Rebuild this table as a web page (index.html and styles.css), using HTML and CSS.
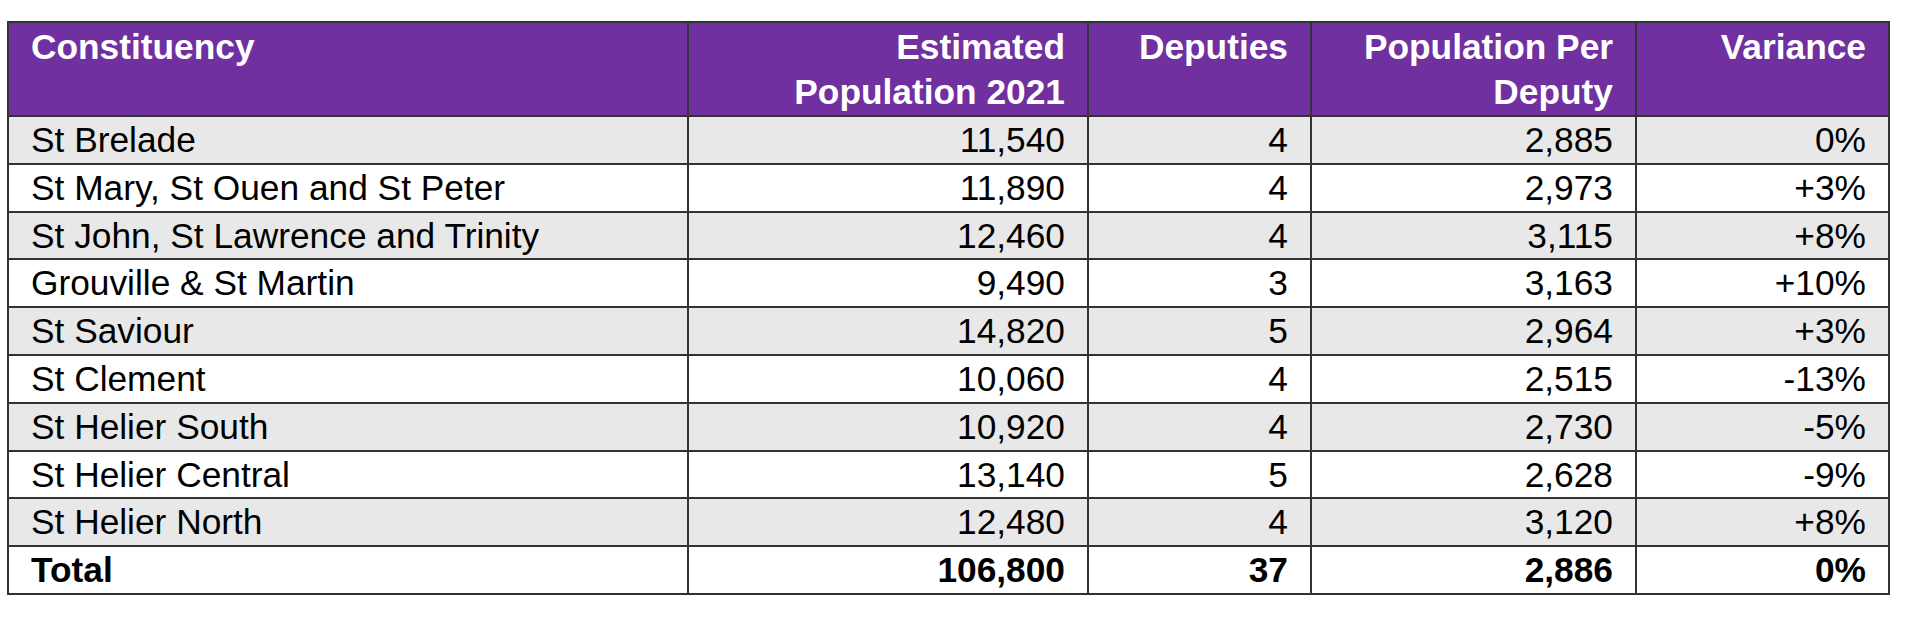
FILE: index.html
```html
<!DOCTYPE html>
<html lang="en">
<head>
<meta charset="utf-8">
<title>Constituency population</title>
<link rel="stylesheet" href="styles.css">
</head>
<body>
<table class="pop-table">
  <colgroup>
    <col class="c-name">
    <col class="c-est">
    <col class="c-dep">
    <col class="c-ppd">
    <col class="c-var">
  </colgroup>
  <thead>
    <tr class="head-row">
      <th class="left">Constituency</th>
      <th class="right">Estimated<br>Population 2021</th>
      <th class="right">Deputies</th>
      <th class="right">Population Per<br>Deputy</th>
      <th class="right">Variance</th>
    </tr>
  </thead>
  <tbody>
    <tr class="shade"><td class="left">St Brelade</td><td class="right">11,540</td><td class="right">4</td><td class="right">2,885</td><td class="right">0%</td></tr>
    <tr><td class="left">St Mary, St Ouen and St Peter</td><td class="right">11,890</td><td class="right">4</td><td class="right">2,973</td><td class="right">+3%</td></tr>
    <tr class="shade"><td class="left">St John, St Lawrence and Trinity</td><td class="right">12,460</td><td class="right">4</td><td class="right">3,115</td><td class="right">+8%</td></tr>
    <tr><td class="left">Grouville &amp; St Martin</td><td class="right">9,490</td><td class="right">3</td><td class="right">3,163</td><td class="right">+10%</td></tr>
    <tr class="shade"><td class="left">St Saviour</td><td class="right">14,820</td><td class="right">5</td><td class="right">2,964</td><td class="right">+3%</td></tr>
    <tr><td class="left">St Clement</td><td class="right">10,060</td><td class="right">4</td><td class="right">2,515</td><td class="right">-13%</td></tr>
    <tr class="shade"><td class="left">St Helier South</td><td class="right">10,920</td><td class="right">4</td><td class="right">2,730</td><td class="right">-5%</td></tr>
    <tr><td class="left">St Helier Central</td><td class="right">13,140</td><td class="right">5</td><td class="right">2,628</td><td class="right">-9%</td></tr>
    <tr class="shade"><td class="left">St Helier North</td><td class="right">12,480</td><td class="right">4</td><td class="right">3,120</td><td class="right">+8%</td></tr>
    <tr class="total"><td class="left">Total</td><td class="right">106,800</td><td class="right">37</td><td class="right">2,886</td><td class="right">0%</td></tr>
  </tbody>
</table>
</body>
</html>
```

FILE: styles.css
```css
html, body {
  margin: 0;
  padding: 0;
  background: #ffffff;
}

body {
  font-family: "Liberation Sans", Arial, sans-serif;
  color: #000000;
}

.pop-table {
  margin: 21px 0 0 7px;
  width: 1883px;
  table-layout: fixed;
  border-collapse: separate;
  border-spacing: 0;
  border-top: 2px solid #333333;
  border-left: 2px solid #333333;
  font-size: 35.3px;
}

.c-name { width: 680px; }
.c-est { width: 400px; }
.c-dep { width: 223px; }
.c-ppd { width: 325px; }
.c-var { width: 253px; }

.pop-table th,
.pop-table td {
  box-sizing: border-box;
  border-right: 2px solid #333333;
  border-bottom: 2px solid #333333;
  padding: 0 22px;
  white-space: nowrap;
}

.head-row th {
  background: #7030a0;
  color: #ffffff;
  font-weight: bold;
  height: 94px;
  line-height: 45px;
  padding-top: 1px;
  padding-bottom: 1px;
  vertical-align: top;
}

.pop-table td {
  height: 47.8px;
  line-height: 45.8px;
  vertical-align: middle;
  font-weight: normal;
}

.shade td {
  background: #e8e8e8;
}

.total td {
  font-weight: bold;
  background: #ffffff;
}

.left { text-align: left; }
.right { text-align: right; }
```
